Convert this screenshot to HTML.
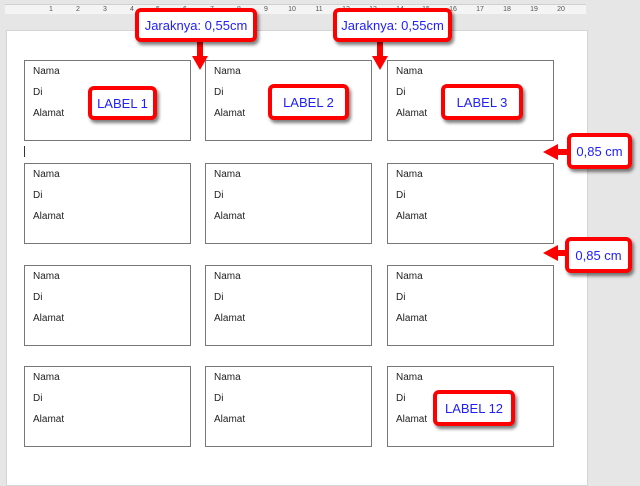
<!DOCTYPE html>
<html><head><style>
body{margin:0;width:640px;height:486px;background:#e6e6e6;position:relative;overflow:hidden;font-family:"Liberation Sans",sans-serif}
.ruler{position:absolute;left:5px;top:4px;width:581px;height:9px;background:#f4f4f4;border-top:1px solid #d0d0d0;font-size:7px;color:#555;line-height:9px}
.ruler span{position:absolute;top:0;transform:translateX(-50%)}
.page{position:absolute;left:6px;top:30px;width:580px;height:454px;background:#fff;border:1px solid #d4d4d4}
.lab{position:absolute;width:167px;height:81px;border:1px solid #777;box-sizing:border-box;font-size:10px;color:#222}
.lab div{position:absolute;left:8px}
.co{position:absolute;box-sizing:border-box;border:4px solid #f00;border-radius:6px;background:#fff;color:#2020ff;font-size:13px;display:flex;align-items:center;justify-content:center;box-shadow:2px 3px 3px rgba(0,0,0,.5);white-space:nowrap}
svg{position:absolute;left:0;top:0}
</style></head><body>
<div class="ruler">
<span style="left:46px">1</span><span style="left:73px">2</span><span style="left:100px">3</span><span style="left:127px">4</span><span style="left:153px">5</span><span style="left:180px">6</span><span style="left:207px">7</span><span style="left:234px">8</span><span style="left:261px">9</span><span style="left:287px">10</span><span style="left:314px">11</span><span style="left:341px">12</span><span style="left:368px">13</span><span style="left:395px">14</span><span style="left:421px">15</span><span style="left:448px">16</span><span style="left:475px">17</span><span style="left:502px">18</span><span style="left:529px">19</span><span style="left:556px">20</span>
</div>
<div class="page"></div>
<div style="position:absolute;left:24px;top:146px;width:1px;height:11px;background:#333"></div>

<div class="lab" style="left:24px;top:60px"><div style="top:5px">Nama</div><div style="top:26px">Di</div><div style="top:47px">Alamat</div></div>
<div class="lab" style="left:205px;top:60px"><div style="top:5px">Nama</div><div style="top:26px">Di</div><div style="top:47px">Alamat</div></div>
<div class="lab" style="left:387px;top:60px"><div style="top:5px">Nama</div><div style="top:26px">Di</div><div style="top:47px">Alamat</div></div>
<div class="lab" style="left:24px;top:163px"><div style="top:5px">Nama</div><div style="top:26px">Di</div><div style="top:47px">Alamat</div></div>
<div class="lab" style="left:205px;top:163px"><div style="top:5px">Nama</div><div style="top:26px">Di</div><div style="top:47px">Alamat</div></div>
<div class="lab" style="left:387px;top:163px"><div style="top:5px">Nama</div><div style="top:26px">Di</div><div style="top:47px">Alamat</div></div>
<div class="lab" style="left:24px;top:265px"><div style="top:5px">Nama</div><div style="top:26px">Di</div><div style="top:47px">Alamat</div></div>
<div class="lab" style="left:205px;top:265px"><div style="top:5px">Nama</div><div style="top:26px">Di</div><div style="top:47px">Alamat</div></div>
<div class="lab" style="left:387px;top:265px"><div style="top:5px">Nama</div><div style="top:26px">Di</div><div style="top:47px">Alamat</div></div>
<div class="lab" style="left:24px;top:366px"><div style="top:5px">Nama</div><div style="top:26px">Di</div><div style="top:47px">Alamat</div></div>
<div class="lab" style="left:205px;top:366px"><div style="top:5px">Nama</div><div style="top:26px">Di</div><div style="top:47px">Alamat</div></div>
<div class="lab" style="left:387px;top:366px"><div style="top:5px">Nama</div><div style="top:26px">Di</div><div style="top:47px">Alamat</div></div>

<svg width="640" height="486">
<g fill="#f00">
<rect x="197" y="40" width="6" height="18"/><polygon points="192,56 208,56 200,70"/>
<rect x="377" y="40" width="6" height="18"/><polygon points="372,56 388,56 380,70"/>
<rect x="556" y="149" width="14" height="6"/><polygon points="558,144 558,160 543,152"/>
<rect x="556" y="250" width="14" height="6"/><polygon points="558,245 558,261 543,253"/>
</g>
</svg>

<div class="co" style="left:135px;top:8px;width:122px;height:34px">Jaraknya: 0,55cm</div>
<div class="co" style="left:333px;top:8px;width:119px;height:34px">Jaraknya: 0,55cm</div>
<div class="co" style="left:88px;top:86px;width:69px;height:34px">LABEL 1</div>
<div class="co" style="left:268px;top:84px;width:81px;height:36px">LABEL 2</div>
<div class="co" style="left:441px;top:84px;width:82px;height:36px">LABEL 3</div>
<div class="co" style="left:567px;top:133px;width:65px;height:36px">0,85 cm</div>
<div class="co" style="left:565px;top:237px;width:67px;height:36px">0,85 cm</div>
<div class="co" style="left:433px;top:390px;width:82px;height:36px">LABEL 12</div>
</body></html>
